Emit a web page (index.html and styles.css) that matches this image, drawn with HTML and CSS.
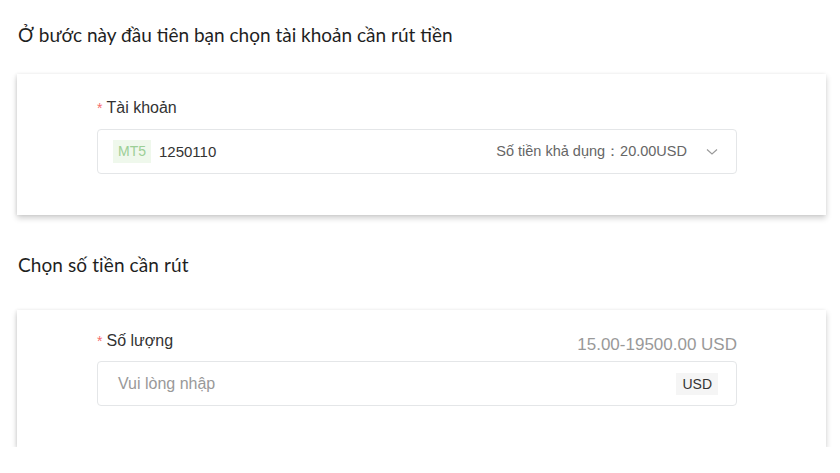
FILE: index.html
```html
<!DOCTYPE html>
<html>
<head>
    <meta charset="UTF-8">
    <title>Rút tiền</title>
    <link rel="stylesheet" href="styles.css">
</head>
<body>
    <h3 class="step-title step-first">Ở bước này đầu tiên bạn chọn tài khoản cần rút tiền</h3>

    <div class="card">
        <div class="form-item">
            <div class="form-label"><span class="req">*</span>Tài khoản</div>
            <div class="field">
                <span class="tag-mt5">MT5</span>
                <span class="account-no">1250110</span>
                <span class="balance">Số tiền khả dụng：20.00USD</span>
                <svg class="chevron" width="12" height="8" viewBox="0 0 12 8">
                    <path d="M1 1.5 L6 6 L11 1.5" fill="none" stroke="#999" stroke-width="1.1"/>
                </svg>
            </div>
        </div>
    </div>

    <h3 class="step-title step-second">Chọn số tiền cần rút</h3>

    <div class="card">
        <div class="form-item">
            <div class="form-label label-row">
                <span class="label-text"><span class="req">*</span>Số lượng</span>
                <span class="range">15.00-19500.00 USD</span>
            </div>
            <div class="field">
                <span class="placeholder">Vui lòng nhập</span>
                <span class="unit">USD</span>
            </div>
        </div>
    </div>
</body>
</html>
```

FILE: styles.css
```css
* {
    box-sizing: border-box;
    margin: 0;
    padding: 0;
}
body {
    font-family: "Liberation Sans", Arial, sans-serif;
    background: #fff;
    color: #333;
    padding: 0 14px 0 17px;
}
.step-title {
    font-family: Lato, "Open Sans", sans-serif;
    font-weight: 400;
    font-size: 19px;
    color: #1f1f1f;
    line-height: 24px;
    padding-left: 1px;
}
.step-first {
    padding-top: 23px;
    margin-bottom: 27px;
}
.step-second {
    letter-spacing: 0.1px;
    margin-top: 38px;
    margin-bottom: 33px;
}
.card {
    width: 809px;
    background: #fff;
    padding: 23px 0 41px 80px;
    box-shadow: 0 3px 6px rgba(0, 0, 0, 0.2), -1px 0 3px rgba(0, 0, 0, 0.06);
}
.form-item {
    width: 640px;
}
.form-label {
    font-size: 16px;
    line-height: 22px;
    color: #333;
    margin-bottom: 10px;
}
.label-row {
    display: flex;
    justify-content: space-between;
    align-items: flex-end;
    margin-bottom: 6px;
}
.label-text {
    position: relative;
    top: -3px;
}
.req {
    color: #f56c6c;
    font-size: 14px;
    margin-right: 4px;
}
.range {
    color: #999;
    font-size: 17px;
    line-height: 20px;
}
.field {
    height: 45px;
    border: 1px solid #e4e6e8;
    border-radius: 4px;
    display: flex;
    align-items: center;
    padding: 0 18px 0 15px;
    font-size: 15px;
}
.tag-mt5 {
    background: #eff8ec;
    color: #9ccf96;
    font-size: 14px;
    padding: 0 5px;
    line-height: 23px;
    margin-right: 8px;
}
.account-no {
    color: #333;
}
.balance {
    margin-left: auto;
    color: #666;
    font-size: 14.5px;
    margin-right: 19px;
}
.chevron {
    display: block;
}
.placeholder {
    color: #999;
    font-size: 16px;
    padding-left: 5px;
}
.unit {
    margin-left: auto;
    background: #f5f5f5;
    color: #333;
    font-size: 14px;
    line-height: 22px;
    padding: 0 6px;
}
```
